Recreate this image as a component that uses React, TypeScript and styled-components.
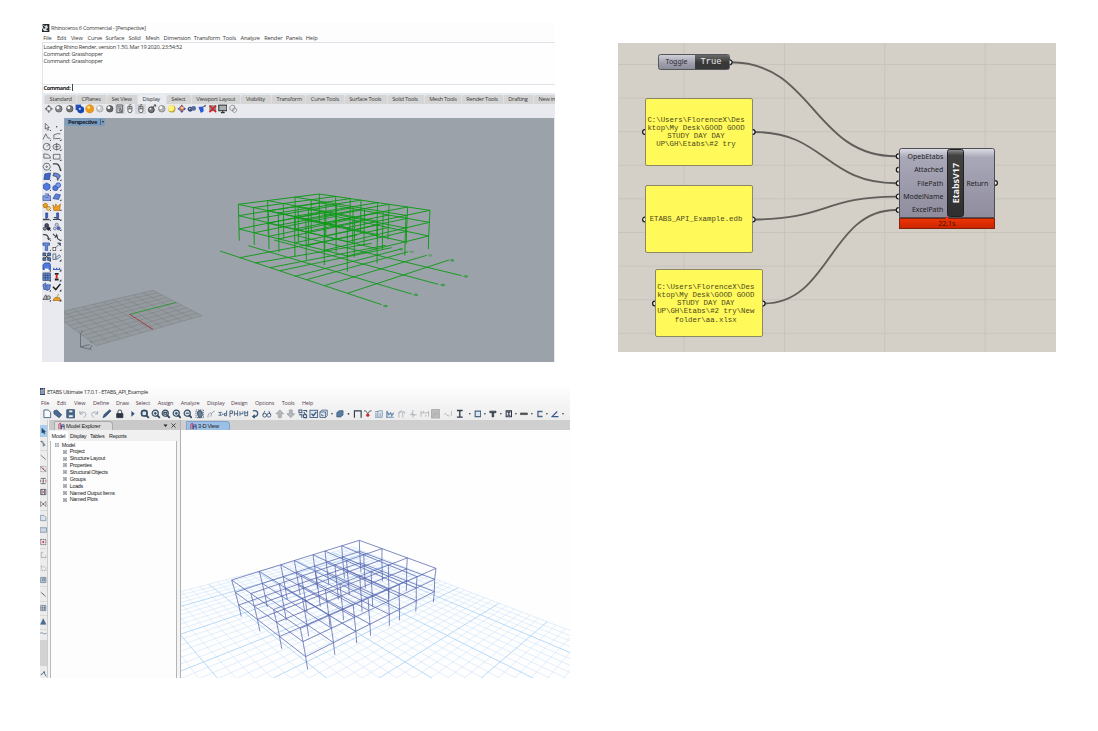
import React from "react";
import styled, { createGlobalStyle } from "styled-components";

const Global = createGlobalStyle`
  * { box-sizing: border-box; }
  body { margin: 0; background: #fff; overflow: hidden; font-family: "Open Sans", "Noto Sans", sans-serif; }
  svg { display: block; }
`;

/* ---------- geometry helpers ---------- */
type P = [number, number];
const mix = (a: P, b: P, t: number): P => [a[0] + (b[0] - a[0]) * t, a[1] + (b[1] - a[1]) * t];
const seg = (a: P, b: P) => `M${a[0].toFixed(2)} ${a[1].toFixed(2)}L${b[0].toFixed(2)} ${b[1].toFixed(2)}`;
const cross = (a: P, b: P, c: P, d: P): P => {
  const rx = b[0] - a[0], ry = b[1] - a[1], sx = d[0] - c[0], sy = d[1] - c[1];
  const t = ((c[0] - a[0]) * sy - (c[1] - a[1]) * sx) / (rx * sy - ry * sx);
  return [a[0] + rx * t, a[1] + ry * t];
};

/* A storey is the quad left, back, right, front; the splits divide its edges into bays. */
type Storey = [P, P, P, P];
type Splits = { lf: number[]; br: number[]; lb: number[]; fr: number[] };
function framePath(storeys: Storey[], s: Splits): string {
  const nodes = storeys.map(([L, B, R, F]) =>
    s.lf.map((u, i) =>
      s.lb.map((v, j) => cross(mix(L, F, u), mix(B, R, s.br[i]), mix(L, B, v), mix(F, R, s.fr[j])))
    )
  );
  let d = "";
  nodes.forEach((n, k) => {
    if (k < nodes.length - 1) {
      n.forEach((row) => (d += seg(row[0], row[row.length - 1])));
      n[0].forEach((_, j) => (d += seg(n[0][j], n[n.length - 1][j])));
    }
  });
  nodes[0].forEach((row, i) => row.forEach((_, j) => {
    for (let k = 0; k < nodes.length - 1; k++) d += seg(nodes[k][i][j], nodes[k + 1][i][j]);
  }));
  return d;
}

/* ---------- page ---------- */
const Page = styled.main`
  width: 1098px; height: 731px; padding: 22px 0 0 40px;
  display: flex; align-items: flex-start; gap: 48px;
`;
const Column = styled.div`display: flex; flex-direction: column; width: 530px;`;
const Spread = styled.div<{ $h: number; $pad?: number; $bg?: string }>`
  display: flex; align-items: center; flex: none; height: ${(p) => p.$h}px;
  padding-left: ${(p) => p.$pad ?? 0}px; background: ${(p) => p.$bg ?? "transparent"};
  white-space: nowrap; overflow: hidden;
`;
const Slot = styled.span<{ $w: number }>`flex: none; width: ${(p) => p.$w}px; white-space: nowrap;`;
const IconCell = styled.span<{ $w: number; $on?: boolean }>`
  flex: none; width: ${(p) => p.$w}px; height: 10px; display: flex; align-items: center; justify-content: center;
  background: ${(p) => (p.$on ? "#d3d6da" : "transparent")};
`;
const Glyph = ({ d, fill = "none", stroke = "#3c4250", size = 9.6, children, w = 0.9 }: {
  d?: string; fill?: string; stroke?: string; size?: number; children?: React.ReactNode; w?: number;
}) => (
  <svg width={size} height={size} viewBox="0 0 10 10" fill={fill} stroke={stroke} strokeWidth={w}>
    {d && <path d={d} />}
    {children}
  </svg>
);

/* widths between consecutive centres */
const widths = (c: number[]) =>
  c.map((x, i) => {
    const a = i ? (x - c[i - 1]) / 2 : (c[1] - x) / 2;
    const b = i < c.length - 1 ? (c[i + 1] - x) / 2 : a;
    return a + b;
  });

/* ---------- Rhinoceros ---------- */
const Rhino = styled.section`
  width: 513.5px; height: 339.5px; margin-left: 1.5px; display: flex; flex-direction: column; overflow: hidden;
  background: #fdfdfd; color: #3a3a3a; font-size: 5.7px; letter-spacing: -0.17px;
`;
const TitleText = styled.span`padding-left: 1.5px; font-size: 5.7px; letter-spacing: -0.31px; color: #444;`;
const History = styled.div`
  flex: none; height: 41.5px; border-top: 1px solid #dfe3ea; border-left: 1.5px solid #dfe3ea; background: #fefefe;
  padding: 1px 0 0 1px; line-height: 7.2px; letter-spacing: -0.27px; font-size: 5.65px;
`;
const Prompt = styled.div`
  flex: none; height: 9px; border-top: 1px solid #dfe3ea; border-left: 1.5px solid #dfe3ea; padding: 0 0 1.5px 1px;
  display: flex; align-items: center; font-weight: 700; color: #222; background: #fff; font-size: 5.5px; letter-spacing: -0.35px;
`;
const Caret = styled.i`width: 0.8px; height: 7px; background: #444; margin-left: 1.8px;`;
const TabRow = styled.div`
  height: 10.5px; padding: 2px 0 0 2.5px; background: #e6e9ef; display: flex; overflow: hidden; flex: none;
`;
const RTab = styled.span<{ $w: number; $on?: boolean }>`
  flex: none; width: ${(p) => p.$w}px; height: 8.5px; line-height: 8.5px; padding-left: 4.6px; white-space: nowrap; letter-spacing: -0.27px;
  background: ${(p) => (p.$on ? "#e9ebf0" : "#d5d5d5")}; border-left: 1px solid #dedfe2;
  border-top-left-radius: 3px; color: #3a3a3a;
`;
const RBody = styled.div`flex: 1; display: flex; min-height: 0; background: #e8eaef;`;
const Tools = styled.div`
  width: 22.5px; padding: 3.7px 0 0 0; display: grid; grid-template-columns: 10.3px 10.3px; grid-auto-rows: 10.06px;
  align-content: start; justify-items: center; align-items: center;
`;
const Viewport = styled.div`position: relative; width: 490px; background: #9ca2aa;`;
const ViewLabel = styled.div`
  position: absolute; left: 1px; top: 0; width: 40px; height: 8.5px; background: #7c9dbe; color: #14202e; font-weight: 700;
  font-size: 5.7px; line-height: 8.5px; padding-left: 3px; letter-spacing: -0.37px; white-space: nowrap;
  & > i { position: absolute; left: 35px; top: 1px; width: 1px; height: 6px; background: #4c647e; }
  & > b { position: absolute; left: 36.6px; top: 3px; border: 1.5px solid transparent; border-top: 2px solid #1a2735; }
`;

const rMenu: [string, number][] = [["File", 13.7], ["Edit", 14], ["View", 16.7], ["Curve", 18], ["Surface", 23], ["Solid", 17], ["Mesh", 18], ["Dimension", 30.3], ["Transform", 29], ["Tools", 17.7], ["Analyze", 23.6], ["Render", 21.7], ["Panels", 20], ["Help", 20]];
const rTabs: [string, number][] = [["Standard", 32], ["CPlanes", 30], ["Set View", 31], ["Display", 28.7], ["Select", 25], ["Viewport Layout", 49.6], ["Visibility", 30.7], ["Transform", 34.3], ["Curve Tools", 38.4], ["Surface Tools", 43], ["Solid Tools", 37], ["Mesh Tools", 37], ["Render Tools", 42], ["Drafting", 30.3], ["New in", 24]];

const Ball = ({ c, hi = "#fff", ring = "#444" }: { c: string; hi?: string; ring?: string }) => (
  <Glyph stroke={ring} w={0.7}>
    <circle cx="5" cy="5" r="3.4" fill={c} />
    <circle cx="4" cy="3.8" r="1.5" fill={hi} stroke="none" />
  </Glyph>
);
const Mouse = () => <Glyph d="M3 2.500h4.200v4.500a2.100 2.100 0 0 1-4.200 0zM3 5h4.200M5 2.500V5M4 1.300l2.500-.8" stroke="#555" fill="#f2f2f2" />;
const rIcons: [number, React.ReactNode, boolean?][] = [
  [49, <Glyph stroke="#666"><circle cx="5" cy="5" r="2.600" fill="#f4f4f4" /><path d="M5 1v2.500M5 6.500V9M1 5h2.500M6.500 5H9" strokeWidth="1.300" /></Glyph>],
  [59.3, <Ball c="#8c8c8c" />],
  [69.3, <Ball c="#777" />],
  [79.3, <Glyph w={0.6} stroke="#123a9c"><rect x="1" y="1" width="5" height="5" fill="#2a58c8" /><circle cx="6" cy="6" r="3.4" fill="#1848b8" /><circle cx="5" cy="5" r="1.2" fill="#bcd2ff" stroke="none" /></Glyph>],
  [89.3, <Glyph stroke="#d27a08" w={0.5}><circle cx="5" cy="5" r="4.300" fill="#f09a1c" /><circle cx="3.800" cy="3.600" r="1.500" fill="#ffe08a" stroke="none" /></Glyph>],
  [99.3, <Ball c="#cfd1d3" ring="#999" />],
  [109.3, <Ball c="#666" />],
  [119.7, <Glyph d="M2 1h6v8H2zM3 3h4M3.5 5h3M4 7l2-2 1 3z" stroke="#555" />, true],
  [130.3, <Mouse />],
  [140.3, <Mouse />, true],
  [152.3, <Glyph stroke="#333" w={0.8}><circle cx="4.5" cy="6" r="3.1" fill="#777" /><circle cx="3.600" cy="5" r="1" fill="#eee" stroke="none" /><path d="M5 4l4-3M7 1h2v2" /></Glyph>],
  [162.3, <Ball c="#b3b3b3" ring="#777" />],
  [172, <Glyph stroke="none"><circle cx="5" cy="5" r="3.8" fill="#b99a2a" /><circle cx="4.4" cy="4.3" r="3.2" fill="#fff27a" /></Glyph>],
  [182.3, <Glyph stroke="none"><path d="M5 .5L7 3H3z" fill="#555" /><path d="M.5 5L3 3v4z" fill="#2a58c8" /><circle cx="5" cy="5" r="2.6" fill="#e46a32" /><path d="M4 3h3v2H4z" fill="#f6d6c8" /><path d="M9.5 5L7 7V3zM5 9.5L3 7h4z" fill="#3a58a8" /></Glyph>],
  [192.3, <Glyph stroke="none"><circle cx="3.3" cy="5.5" r="2.6" fill="#3b4a78" /><circle cx="6.9" cy="4.6" r="2.5" fill="#5a6a9c" /><circle cx="3" cy="5" r=".8" fill="#cdd8ff" /></Glyph>],
  [202, <Glyph stroke="none"><path d="M1.500 3l5-.5.5 5-3 2z" fill="#2a5ad2" /><path d="M6 3l3-2.500v2z" fill="#333" /></Glyph>],
  [212.3, <Glyph><path d="M2 2h6v5H2z" fill="#9aa" stroke="#666" /><path d="M1.5 1.5l7 7M8.5 1.5l-7 7" stroke="#d81e1e" strokeWidth="1.6" /></Glyph>],
  [222.7, <Glyph stroke="#333" w={1.1}><rect x=".8" y="1.2" width="8.4" height="5.8" fill="#a9b0b4" /><path d="M3 9h4M5 7v2" /></Glyph>],
  [233, <Glyph d="M2 3l2-2 3 1v3L5 7 2 6zM5 5l2-1 2 1.4v2L7 9 5 8z" stroke="#777" w={0.7} />],
];

const k = "#3d4148", bl = "#3f66c4", or = "#f0a020";
const Corner = () => <path d="M10 7.8v2.2H7.8z" fill="#222" stroke="none" />;
const rTools: React.ReactNode[] = [
  <path d="M3.500 1.500v6l1.400-1.200L6 8.800l1-.5-1-2.400h1.700z" fill="#fff" stroke={k} />,
  <circle cx="5" cy="5" r=".8" fill={k} stroke="none" />,
  <path d="M1 8L4 2l2 4 3 1" stroke={k} />,
  <path d="M2 8V3q4-2 7-1M3 7h6" stroke={k} />,
  <g stroke={k}><circle cx="5" cy="5" r="3.6" /><path d="M5 5l3-3" /></g>,
  <g stroke={k}><ellipse cx="5" cy="5.2" rx="4" ry="3" /><path d="M5 1v8M3 5h4" /></g>,
  <path d="M2 2q7 0 7 4.500H2z" stroke={k} />,
  <path d="M1.5 2.5h7v5h-7z" stroke={k} />,
  <g stroke={k}><path d="M3 1.5h4l2 3.5-2 3.5H3L1 5z" /><circle cx="5" cy="5" r=".8" /></g>,
  <path d="M1 2h4q3 1 4 7" stroke={k} strokeWidth="1.4" />,
  <path d="M2 8L3 2l6-1-1 7z" fill={bl} stroke="#27418c" />,
  <path d="M2 1q5 0 7 3L6 9 5 5 1 4z" fill="#6b8bd6" stroke="#335" />,
  <path d="M1.5 3L5 1l3.5 2v4L5 9 1.5 7z" fill="#4f79e0" stroke="#2a489a" />,
  <g stroke="#2a489a"><circle cx="3.6" cy="6.4" r="2.8" fill="#4f79e0" /><circle cx="6.6" cy="3.4" r="2.6" fill="#7b9cf0" /></g>,
  <path d="M1 4h8v5H1zM3 2h4v2M3 6h4" fill="#8ca8ea" stroke="#3a559c" />,
  <path d="M1 7l3-5 5 1-2 5z" fill="#5b80d4" stroke="#2a489a" />,
  <g stroke="#a66a0a"><path d="M1 3l3-2 2 2-1 3-3 0z" fill={or} /><path d="M5 5l3 0 1 2-2 2-2-1z" fill="#ffd070" /></g>,
  <path d="M1 3l2 3 1-4 2 3 3-3-1 7H2z" fill={or} stroke="#b86c08" />,
  <g><path d="M4 1h2v5l-2 1z" fill={bl} stroke="#223c8a" /><path d="M1 8h7" stroke={k} strokeWidth="1.5" /></g>,
  <g><path d="M5 1h2v6H5z" fill={bl} stroke="#223c8a" /><path d="M1 8h8M2 6h3" stroke={k} strokeWidth="1.3" /></g>,
  <g stroke="#222" fill="#46507c"><circle cx="5" cy="3.6" r="2" /><circle cx="3" cy="7" r="1.7" fill="#99a" /><circle cx="7" cy="7" r="1.7" fill="#224" /></g>,
  <g stroke="#668" fill="#c6cdf0"><circle cx="5" cy="3" r="1.7" /><circle cx="3" cy="7" r="1.5" /><circle cx="7" cy="6.7" r="1.8" fill="#4460c8" /></g>,
  <path d="M1 3q6-1 6 5M6 6l1 2 2-1" stroke={k} strokeWidth="1.2" />,
  <path d="M1 2l3 3 1-2 1 4 3 2M3 6l3-2" stroke={k} strokeWidth="1.1" />,
  <path d="M1 1h7v2.5H6V9H3.5V3.5H1z" fill="#6b8fe0" stroke="#2c4890" />,
  <g stroke={k}><rect x="1" y="6" width="3" height="3" fill="#fff" /><path d="M4 6l3-3M6 1h3v3z" fill="#579" /></g>,
  <g fill="#5b80d4" stroke="#234"><path d="M1 1h3v3H1zM6 1h3v3H6zM1 6h3v3H1zM6 6h3v3H6z" /><path d="M3 3l4 4M7 3L3 7" stroke="#222" /></g>,
  <path d="M1 2h3v6H1zM4 6l4-3 1 2-4 3z" fill="#dbe4fa" stroke="#456" />,
  <g><path d="M1 3l2-2h5l1 2v5H1z" fill="#4f79e0" stroke="#26408c" /><path d="M3 7h4v2H3z" fill="#fff" stroke="none" /></g>,
  <path d="M1 8h8M2 6v2M5 6v2M8 6v2" stroke="#3e62c0" strokeWidth="1.3" />,
  <g fill="#6b8fe0" stroke="#38486c"><path d="M1 1h8v8H1zM1 3.6h8M1 6.2h8M3.6 1v8M6.2 1v8" /></g>,
  <g stroke="none"><path d="M3 1h4v2H3zM3 7h4v2H3z" fill="#222" /><path d="M4 3h2v4H4z" fill="#d42222" /></g>,
  <path d="M1 3l3-2v7H2zM5 3h4L8 8 5 9z" fill="#6b8fe0" stroke="#2c4890" />,
  <path d="M1 5l3 3 5-6" stroke="#222" strokeWidth="1.6" />,
  <g stroke={k} fill="#bbb"><path d="M1 8l3-5 2 5z" /><circle cx="7" cy="6" r="2" /></g>,
  <path d="M1 9l2-3h5l1 3zM5 6l2-4" fill={or} stroke="#9c6a14" />,
];

const rz = (x: number, y: number): P => [215 + x / 3 - 64, 180 + y / 3 - 118];
const rStoreys: Storey[] = [
  [rz(70, 73), rz(313, 42), rz(645, 91), rz(397, 143)],
  [rz(71, 107), rz(313, 68), rz(643, 127), rz(397, 185)],
  [rz(72, 147), rz(313, 99), rz(641, 168), rz(397, 228)],
  [rz(73, 182), rz(313, 130), rz(640, 207), rz(397, 275)],
];
const rSplits: Splits = {
  lf: [0, 0.139, 0.275, 0.367, 0.515, 0.62, 0.787, 1],
  br: [0, 0.148, 0.28, 0.377, 0.527, 0.63, 0.798, 1],
  lb: [0, 0.362, 0.7, 1],
  fr: [0, 0.367, 0.71, 1],
};
const rGround: [number, number, number, number][] = [
  [15, 213, 500, 374], [100, 197, 590, 342], [177, 180, 670, 313], [245, 167, 740, 287],
  [75, 233, 425, 166], [120, 249, 470, 190], [165, 263, 512, 196], [195, 272, 530, 203], [240, 289, 562, 206], [275, 299, 580, 215], [328, 317, 635, 226], [397, 340, 702, 240],
];
const cz = (x: number, y: number): P => [38 + x / 3 - 64, 115 + y / 3 - 118];
const plane: Storey = [cz(45, 596), cz(345, 526), cz(492, 602), cz(175, 692)];
function planePath(): string {
  const [L, B, R, F] = plane;
  let d = "";
  for (let i = 0; i <= 10; i++) {
    const t = i / 10;
    d += seg(mix(L, B, t), mix(F, R, t ** 0.92)) + seg(mix(L, F, t ** 1.08), mix(B, R, t ** 1.04));
  }
  return d;
}
const Labels = () => (
  <g stroke="#149a1c" strokeWidth="1">
    {[[511, 377], [602, 343], [683, 314], [752, 288], [711, 240], [645, 225], [590, 214], [558, 207]].map(([x, y], i) => {
      const p = rz(x, y);
      return <path key={i} d={`M${p[0] - 2.3} ${p[1] + 0.5}q2-1.4 4.4-.4M${p[0] - 1} ${p[1] + 1}h3`} strokeOpacity={i > 4 ? 0.45 : 0.85} />;
    })}
  </g>
);

const RhinoWindow = () => (
  <Rhino>
    <Spread $h={11.5}>
      <svg width="8" height="8" viewBox="0 0 8 8"><rect width="7.4" height="8" fill="#26292c" /><path d="M0 0l3 2 2-1 1 3-2 1 2 2-4 0-2-3z" fill="#d9dcde" /><path d="M1 1.6l2 2-1 1zM5 5l2 2" stroke="#222" strokeWidth=".7" /></svg>
      <TitleText>Rhinoceros 6 Commercial - [Perspective]</TitleText>
    </Spread>
    <Spread $h={8.5} $pad={1.7}>{rMenu.map(([t, w]) => <Slot key={t} $w={w}>{t}</Slot>)}</Spread>
    <History>
      <div>Loading Rhino Render, version 1.50, Mar 19 2020, 23:54:52</div>
      <div>Command: Grasshopper</div>
      <div>Command: Grasshopper</div>
    </History>
    <Prompt>Command:<Caret /></Prompt>
    <Spread $h={0.5} $bg="#e6e9ef" />
    <TabRow>{rTabs.map(([t, w]) => <RTab key={t} $w={w} $on={t === "Display"}>{t}</RTab>)}</TabRow>
    <Spread $h={11.5} $pad={2.4} $bg="#e8eaef">
      {rIcons.map(([, g, on], i) => <IconCell key={i} $w={widths(rIcons.map((r) => r[0]))[i]} $on={on}>{g}</IconCell>)}
    </Spread>
    <Spread $h={2.5} $bg="#e8eaef" />
    <RBody>
      <Tools>{rTools.map((g, i) => <Glyph key={i} w={0.75} size={9.4}>{g}<Corner /></Glyph>)}</Tools>
      <Viewport>
        <svg width="490" height="243" viewBox="0 0 490 243" fill="none">
          <path d={`M${plane.map((p) => p.join(" ")).join("L")}Z`} fill="#959a9f" />
          <path d={planePath()} stroke="#7b8087" strokeWidth=".5" />
          <path d={seg(cz(275, 598), cz(415, 562))} stroke="#2c9a34" strokeWidth=".9" />
          <path d={seg(cz(275, 598), cz(345, 643))} stroke="#a83238" strokeWidth=".9" />
          <path d="M16.500 215v14l11 2.500M16.500 229l9-2.500M17 214.500l2-1M26 223l2 2M26 231l2-4" stroke="#555b63" strokeWidth=".7" />
          <path d={rGround.map(([a, b, c, e]) => seg(rz(a, b), rz(c, e))).join("")} stroke="#149a1c" strokeWidth=".95" />
          <path d={framePath(rStoreys, rSplits)} stroke="#0f9a18" strokeWidth=".95" />
          <Labels />
        </svg>
        <ViewLabel>Perspective<i /><b /></ViewLabel>
      </Viewport>
    </RBody>
  </Rhino>
);

/* ---------- ETABS ---------- */
const Etabs = styled.section`
  width: 529.5px; height: 292px; margin-top: 24.5px; display: flex; flex-direction: column; overflow: hidden;
  background: #f4f4f4; color: #222; font-size: 5.5px; letter-spacing: -0.15px;
`;
const ETop = styled.div`background: linear-gradient(#fefefe, #ededee); color: #573f50;`;
const ETitle = styled.div`
  height: 11.5px; display: flex; align-items: center; gap: 2px; color: #333; letter-spacing: -0.37px; font-size: 5.7px;
`;
const EBody = styled.div`flex: 1; display: flex; min-height: 0;`;
const Rail = styled.div`
  width: 7.5px; background: #ececec; border-right: 0.5px solid #ccc; display: flex; flex-direction: column; align-items: center; overflow: hidden;
`;
const RailCell = styled.span<{ $h: number; $on?: boolean; $rule?: boolean }>`
  flex: none; width: 100%; height: ${(p) => p.$h}px; display: flex; align-items: center; justify-content: center;
  background: ${(p) => (p.$on ? "#a9cdee" : "transparent")};
  border-top: ${(p) => (p.$rule ? "1px solid #dadada" : "none")};
`;
const RailGap = styled.div`width: 100%; flex: none; height: 26px; margin: 2.5px 0 4px; background: #d2d2d2;`;
const Explorer = styled.div`
  width: 130.5px; margin-left: 1.5px; display: flex; flex-direction: column; font-family: "Liberation Sans", sans-serif;
  font-size: 5.5px; letter-spacing: -0.25px;
`;
const EHead = styled.div`height: 10px; background: #c9c9c9; display: flex; align-items: flex-end; padding: 0 4px 0 5px;`;
const ECaption = styled.div<{ $active?: boolean }>`
  width: ${(p) => (p.$active ? 44 : 59)}px; height: 9px; display: flex; align-items: center; gap: 1px; padding-left: 3px;
  background: ${(p) => (p.$active ? "#9cbfe6" : "#dcdcdc")}; border: 0.7px solid ${(p) => (p.$active ? "#7fa3cc" : "#aaa")};
  border-bottom: none; border-radius: 1px 4px 0 0; font-family: "Liberation Sans", sans-serif; letter-spacing: -0.28px; font-size: 5.7px;
`;
const HeadTools = styled.div`margin-left: auto; height: 10px; display: flex; align-items: center; gap: 3px;`;
const ETabs = styled.div`height: 10.5px; display: flex; background: #f0f0f0; align-items: flex-end; padding-left: 0.5px;`;
const ETab = styled.span<{ $w: number; $on?: boolean }>`
  width: ${(p) => p.$w}px; height: 9.5px; line-height: 10px; padding-left: 2px; background: ${(p) => (p.$on ? "#fff" : "transparent")};
`;
const Tree = styled.div`
  flex: 1; margin: 0 3px 0 1px; background: #fdfdfd; border-left: 0.5px solid #bbb; border-right: 1px solid #b5b5b5;
  padding: 1px 0 0 3.5px; letter-spacing: -0.27px; font-size: 5.4px;
`;
const Node = styled.div<{ $depth: number }>`
  display: flex; align-items: center; gap: 3px; height: 6.87px; line-height: 6.87px; padding-left: ${(p) => p.$depth * 8}px; white-space: nowrap;
`;
const Main = styled.div`
  flex: 1; display: flex; flex-direction: column; border-left: 1px solid #b0b0b0; background: #fefefe; min-width: 0;
`;
const MainHead = styled.div`height: 10px; background: #cfcfcf; display: flex; align-items: flex-end; padding-left: 5.5px; flex: none;`;

const Box = ({ minus }: { minus?: boolean }) => (
  <svg width="4.2" height="4.2" viewBox="0 0 5 5" fill="#fff" stroke="#8f99a8" strokeWidth=".8">
    <rect x=".5" y=".5" width="4" height="4" /><path d={minus ? "M1.5 2.5h2" : "M1.3 2.5h2.4M2.5 1.3v2.4"} stroke="#556" />
  </svg>
);
const eMenu: [string, number][] = [["File", 16], ["Edit", 17], ["View", 19], ["Define", 23], ["Draw", 19.7], ["Select", 22], ["Assign", 23], ["Analyze", 26.3], ["Display", 24], ["Design", 24], ["Options", 26.7], ["Tools", 20.3], ["Help", 20]];
const n = "#3b5878", g = "#aeb2b6";
const Lens = ({ s }: { s?: string }) => (
  <Glyph stroke="#33475e" w={1.2}><circle cx="4.4" cy="4.4" r="3.2" fill="#dce6f0" /><path d="M6.6 6.6L9.2 9.2" strokeWidth="2" />{s && <path d={s} />}</Glyph>
);
const Dot = () => <Glyph stroke="none"><circle cx="5" cy="5" r="1" fill="#333" /></Glyph>;
const eIcons: [number, React.ReactNode][] = [
  [47, <Glyph d="M2 1h4.5L9 3.4V9H2z" fill="#f6faff" stroke={n} />],
  [57.3, <Glyph d="M1 2l3-1 5 5-2.6 3L1 5z" fill="#4a6c90" stroke={n} />],
  [70.3, <Glyph stroke={n}><path d="M.8.8h8.4v8.4H.8z" fill="#4a6684" /><path d="M2.8 1h4.4v3H2.8zM2.4 6h5.2v3H2.4z" fill="#e8eef4" /></Glyph>],
  [83.7, <Glyph d="M2 5q2-3 5-1.4T6 9M2 2v3.2h3" stroke="#9aa4ae" />],
  [94, <Glyph d="M8 5q-2-3-5-1.4T4 9M8 2v3.2H5" stroke="#9aa4ae" />],
  [106.7, <Glyph d="M1 9l1.5-3.5L8 .8 9.4 2 4 7.6z" fill="#3d5d80" stroke={n} />],
  [120, <Glyph stroke="#2b3440"><path d="M3 5V3q0-2 2-2t2 2v2" /><path d="M1.8 4.8h6.4V9H1.8z" fill="#2b3440" /></Glyph>],
  [132.7, <Glyph d="M3.5 2L7 5 3.5 8z" fill="#2f5078" stroke="none" />],
  [145.3, <Lens s="M2 2h5v5H2z" />],
  [156, <Lens s="M3 4.4h3M4.4 3v3" />],
  [166.3, <Lens s="M3 3.5h3v2H3z" />],
  [176.7, <Lens s="M3 4.4h3M4.4 3v3" />],
  [187, <Lens s="M3 4.4h3" />],
  [200.3, <Glyph stroke="#33475e"><path d="M1 1h8v8H1z" strokeDasharray="1 1" /><path d="M2.5 5V3h1V2h1v-.5h1V2h1v1h1v4L6 9H4z" fill="#6a8098" /></Glyph>],
  [210.3, <Glyph d="M2 9q0-5 3-5M5 8q0-5 4-6" stroke="#8a98a8" />],
  [223.7, <Glyph d="M.5 3.5h3L2 5l1.5 1.5H.5M4 5.4h2M9 1.500v5.500H6.8V4.6H9" stroke={n} />],
  [234, <Glyph d="M1 2v6.500M1 2h2.600v2.600H1M5.600 2v5M9 1.500v6M5.600 5H9" stroke={n} />],
  [244.3, <Glyph d="M1 2.500v4.500M1 5h3V2.500M6 2v5h3M9 2v5M6 4h3" stroke={n} />],
  [255, <Glyph d="M3 2q5-1 5 2.5T4 8M5 6L3 8l2 1.4" stroke={n} w={1.4} />],
  [267, <Glyph stroke={n}><circle cx="2.8" cy="6.5" r="2" /><circle cx="7.2" cy="6.5" r="2" /><path d="M1 6l2-4M9 6L7 2M4.6 6h.8" /></Glyph>],
  [280.3, <Glyph d="M5 1l4 4H6.5v4h-3V5H1z" fill="#b4b7bb" stroke="#a0a3a7" />],
  [291, <Glyph d="M5 9l4-4H6.5V1h-3v4H1z" fill="#b4b7bb" stroke="#a0a3a7" />],
  [303.5, <Glyph d="M1 1h3v3H1zM5.5 1.5H9v2M1 6h3v3M5.5 6H9v3H6zM6 3l2 3" stroke={n} w={1.1} />],
  [314, <Glyph stroke={n}><rect x="1" y="1.3" width="8" height="7.6" fill="#dfe9f4" /><path d="M2.6 5l2 2 3-4" strokeWidth="1.4" /></Glyph>],
  [324.3, <Glyph d="M1 3h6v6H1zM1 3l2-2h6v6L7 9M3 5v2h2" stroke={n} fill="#e4ecf4" />],
  [332.3, <Dot />],
  [340, <Glyph d="M1 3.5L4 1h5v5.5L6 9H1z" stroke={n} fill="#5a7ca4" />],
  [348, <Dot />],
  [358, <Glyph d="M1.5 9V2h7v7" stroke="#333f4c" w={1.2} />],
  [368.3, <Glyph><path d="M1 2h2l2 3 2-3h2" stroke="#555" /><circle cx="5" cy="6.500" r="1.7" fill="#cc2b2b" stroke="none" /></Glyph>],
  [379, <Glyph d="M1 8.6h8M2 8V4M4 8V2.6M6.4 8V4M8.6 8V1.6M1 3l7-1.4" stroke="#6a8cae" />],
  [389.3, <Glyph d="M1 8.6h8M2 8V2l2 4 2-2 1 3 2-3" stroke="#6a8cae" w={1.3} />],
  [402, <Glyph d="M2 9V3h6M6 3v6M2 5l3-4M8 3v2" stroke={g} />],
  [414.7, <Glyph d="M4 1v8M2 4l4 3M1 6h7" stroke={g} />],
  [425.3, <Glyph d="M1 8V2M1 4h8M9 2v6M4 2l-1 2M6 6v2" stroke={g} />],
  [436, <Glyph stroke="#aaa"><rect x=".6" y=".6" width="8.8" height="8.8" fill="#bcbcbc" /><path d="M2 8l3-4 3 2" /></Glyph>],
  [446, <Glyph d="M1 6q2-3 3 0t3 0M9 2v5" stroke={g} />],
  [462.3, <Glyph d="M2 1.6h6M5 1.6v6.8M2 8.4h6" stroke="#333f4c" w={1.4} />],
  [470, <Dot />],
  [477.7, <Glyph d="M1.5 1.5h7v7h-7z" fill="#dbe7f4" stroke="#4a6684" w={1.5} />],
  [485.7, <Dot />],
  [493.3, <Glyph d="M1 1.6h8v2H6V9H4V3.6H1z" fill="#333f4c" stroke="#333f4c" />],
  [501.3, <Dot />],
  [508.7, <Glyph stroke="#2b3644" w={1.4}><path d="M1.5 1.2h7v7.6h-7zM3 3h4M5 3v4M3 7h4" /></Glyph>],
  [516.7, <Dot />],
  [524.3, <Glyph d="M.5 4h9v2h-9zM2 4v2M4 4v2M6 4v2M8 4v2" fill="#777" stroke="#444" />],
  [532.3, <Dot />],
  [539.7, <Glyph d="M8.5 2h-6v6.5h6" stroke="#4a6684" w={1.7} />],
  [547.7, <Dot />],
  [555.3, <Glyph d="M.5 8.6h9M2 8l6-6" stroke="#355a8c" w={1.6} />],
  [563.3, <Dot />],
];
const rail: [number, React.ReactNode, boolean?, boolean?][] = [
  [5.2, null],
  [12, <path d="M3 1v7l2-1.6L6.4 9.4l1-.5L6 6h2.4z" fill="#22476c" stroke="#22476c" />, true],
  [13, <path d="M1 1h4M5 3v6M5 3l3 4H5M1 1l4 3" stroke={n} />],
  [13, <path d="M1 2l8 7" stroke="#3d5068" />, false, true],
  [11.7, <g><path d="M1 1h8v8H1z" stroke="#667" strokeDasharray="1 1" /><path d="M1 1l8 8" stroke="#333" /><circle cx="5" cy="5" r="1" fill="#d22" stroke="none" /></g>],
  [11.7, <g><path d="M1 1h8M1 9h8M5 1v8M1 3v4M9 3v4" stroke="#445" /><circle cx="5" cy="5" r="1" fill="#d22" stroke="none" /></g>],
  [11.7, <g><path d="M1 1h8v8H1zM3 1v8M7 1v8" stroke="#334" /><circle cx="5" cy="5" r="1.2" fill="#d22" stroke="none" /></g>],
  [12, <g><path d="M1 1l8 8M9 1L1 9M1 1v8M9 1v8" stroke="#667" /><circle cx="5" cy="5" r="1" fill="#d22" stroke="none" /></g>],
  [14, <path d="M1 1h5l3 3v5H1z" fill="#dbe5ef" stroke="#6b7f94" />, false, true],
  [11.7, <path d="M0 1.5h10v7H0z" fill="#c9d8e8" stroke="#6b7f94" />],
  [12, <g><path d="M1 1h8v8H1z" stroke="#334" strokeDasharray="2 1" fill="#e8dfe4" /><circle cx="5" cy="5" r="1.4" fill="#d22" stroke="none" /></g>],
  [14, <path d="M2 1v8h7V6M2 1h3" stroke="#999" />, false, true],
  [11.7, <path d="M2 1v8h7V4M2 3h5" stroke="#999" strokeDasharray="2 1" />],
  [12, <path d="M1 1h8v8H1zM4 3h3v3H4z" stroke="#5f7288" fill="#b9c8d6" />],
  [15, <path d="M1 2l8 7M4 4l2 2" stroke="#3d5068" />, false, true],
  [14, <path d="M1 1h8v8H1zM1 4h8M1 6.6h8M4 1v8M7 1v8" stroke="#5f7288" fill="#e0e8f0" />, false, true],
  [14, <path d="M5 0l4 8.500H1z" fill="#4d6d8e" stroke="#4d6d8e" />, false, true],
  [9, <path d="M0 4q2.500-2 5 0t5 0" stroke="#55718e" />, false, true],
];

const ez = (x: number, y: number): P => [180 + x / 3 - 180, 530 + y / 3 - 430];
const eStoreys: Storey[] = [
  [ez(152, 150), ez(535, 31), ez(765, 115), ez(358, 295)],
  [ez(163, 187), ez(536, 64), ez(761, 148), ez(366, 335)],
  [ez(173, 225), ez(538, 98), ez(760, 185), ez(374, 380)],
  [ez(181, 260), ez(540, 127), ez(757, 217), ez(380, 418)],
];
const eSplits: Splits = {
  lf: [0, 0.28, 0.61, 1],
  br: [0, 0.296, 0.626, 1],
  lb: [0, 0.217, 0.384, 0.491, 0.637, 0.731, 0.862, 1],
  fr: [0, 0.216, 0.39, 0.5, 0.65, 0.73, 0.86, 1],
};
/* Floor grid: both line families run from a vanishing point to even steps on a base line. */
const sh = (p: P): P => [p[0] - 180, p[1] - 430];
const vA: P = [-16, 406], vB: P = [758, 441];
const base = (x: number): P => [x, 678 + 0.045 * (x - 375)];
function floor(major: boolean): string {
  let d = "";
  const div = 6, a0 = 735, b0 = -74.67, sa = 112.5, sb = 97;
  for (let i = -4; i < 80; i++) {
    if ((Math.abs(i) % div === 0) !== major) continue;
    const x = 660 - (i * sa) / div;
    if (x > a0 + 1) continue;
    const far = cross(vA, base(x), vB, base(b0));
    if (far[0] < vA[0]) continue;
    const to = base(x);
    d += seg(sh(far), sh([to[0] + (to[0] - vA[0]), to[1] + (to[1] - vA[1])]));
  }
  for (let i = -34; i < 60; i++) {
    if ((Math.abs(i) % div === 0) !== major) continue;
    const x = 475 + (i * sb) / div;
    if (x < b0 - 1) continue;
    const far = cross(vB, base(x), vA, base(a0));
    const to = base(x);
    if (far[0] > vB[0]) continue;
    d += seg(sh(far), sh([to[0] + (to[0] - vB[0]), to[1] + (to[1] - vB[1])]));
  }
  return d;
}
const Logo = () => (
  <svg width="7" height="7.500" viewBox="0 0 8 8" fill="none" strokeWidth="1"><path d="M1 8V2l2-1v7" stroke="#c8325a" /><path d="M4 8V3h3v5M4 5h3" stroke="#28518c" /></svg>
);

const EtabsWindow = () => (
  <Etabs>
    <ETop>
      <ETitle>
        <svg width="5" height="7" viewBox="0 0 5 7"><rect width="5" height="7" fill="#34466a" /><path d="M1 6V2h1v4M3 6V1h1v5" stroke="#e8ecf2" strokeWidth=".6" fill="none" /></svg>
        ETABS Ultimate 17.0.1 - ETABS_API_Example
      </ETitle>
      <Spread $h={11} $pad={1}>{eMenu.map(([t, w]) => <Slot key={t} $w={w}>{t}</Slot>)}</Spread>
      <Spread $h={11.5} $pad={1.8}>
        {eIcons.map(([, ic], i) => <IconCell key={i} $w={widths(eIcons.map((r) => r[0]))[i]}>{ic}</IconCell>)}
      </Spread>
    </ETop>
    <EBody>
      <Rail>
        {rail.map(([h, ic, on, rule], i) => <RailCell key={i} $h={h} $on={on} $rule={rule}>{ic && <Glyph size={8} w={1}>{ic}</Glyph>}</RailCell>)}
        <RailGap />
        <Glyph size={7} d="M1 7l3-2 2-3 1 4 2 3" stroke={n} w={1.2} />
      </Rail>
      <Explorer>
        <EHead>
          <ECaption><Logo />Model Explorer</ECaption>
          <HeadTools><Glyph size={5} d="M1 3h8L5 8z" fill="#222" stroke="none" /><Glyph size={5} d="M1 1l8 8M9 1L1 9" stroke="#222" w={1.6} /></HeadTools>
        </EHead>
        <ETabs><ETab $w={18.5} $on>Model</ETab><ETab $w={20}>Display</ETab><ETab $w={19}>Tables</ETab><ETab $w={24}>Reports</ETab></ETabs>
        <Tree>
          <Node $depth={0}><Box minus />Model</Node>
          {["Project", "Structure Layout", "Properties", "Structural Objects", "Groups", "Loads", "Named Output Items", "Named Plots"].map((t) => (
            <Node key={t} $depth={1}><Box />{t}</Node>
          ))}
        </Tree>
      </Explorer>
      <Main>
        <MainHead><ECaption $active><Logo />3-D View</ECaption></MainHead>
        <svg width="389" height="248" viewBox="0 0 389 248" fill="none">
          <path d={floor(false)} stroke="#c9e2fa" strokeWidth=".55" />
          <path d={floor(true)} stroke="#a6d1f7" strokeWidth=".8" />
          <path d={framePath(eStoreys, eSplits)} stroke="#5664ae" strokeWidth=".75" />
        </svg>
      </Main>
    </EBody>
  </Etabs>
);

/* ---------- Grasshopper canvas ---------- */
const Canvas = styled.section`
  position: relative; width: 438px; height: 309px; margin-top: 21px; overflow: hidden; background-color: #d4cfc7;
  background-image: linear-gradient(90deg, #c8c4bd 1px, transparent 1px), linear-gradient(#c8c4bd 1px, transparent 1px);
  background-size: 100.4px 100%, 100% 33.6px; background-position: 65.5px 0, 0 21px;
`;
const Wires = styled.svg`position: absolute; left: 0; top: 0;`;
const Panel = styled.div<{ $x: number; $y: number }>`
  position: absolute; left: ${(p) => p.$x}px; top: ${(p) => p.$y}px; width: 108px; height: 68px; padding: 0 6px 0 0;
  background: #fff959; border: 1px solid #8b8862; border-radius: 2px; display: flex; align-items: center; justify-content: center;
  text-align: center; white-space: pre; font: 7.36px/8.1px "Liberation Mono", monospace; color: #4a4720;
`;
const Toggle = styled.div`
  position: absolute; left: 40px; top: 11px; width: 72px; height: 16px; display: flex; border: 1px solid #55555c; border-radius: 2.5px;
  background: linear-gradient(#cfcfd8, #9f9eac 60%, #8d8c9b); font: 7px/14px "Noto Sans", sans-serif; color: #2a2a30; overflow: hidden;
  & > span { flex: 1; text-align: center; padding-right: 1px; }
  & > b { width: 34px; padding-right: 2px; background: linear-gradient(#6b6b6b, #383838 55%); color: #e8e8e8; text-align: center; font: 8.8px/14.5px "Liberation Mono", monospace; }
`;
const Component = styled.div`
  position: absolute; left: 280.5px; top: 105px; width: 96.5px; height: 70px; display: flex; border: 1px solid #4e4d55; border-radius: 2.5px 2.5px 0 0;
  background: linear-gradient(#dcdce4, #a9a8b8 12%, #8f8d9d); font: 6.95px "Noto Sans", sans-serif; color: #1e1d24;
`;
const Inputs = styled.div`
  width: 47.5px; padding: 0.6px 3.7px 0 0; display: flex; flex-direction: column; text-align: right; line-height: 13.45px;
`;
const Core = styled.div`
  width: 17px; background: linear-gradient(#8a8a8a, #424242 8%, #2f2f2f); border: 1px solid #222; border-radius: 2.5px;
  display: flex; align-items: center; justify-content: center; color: #f2f2f2;
  & > span { writing-mode: vertical-rl; transform: rotate(180deg); font: 700 9px/15px "Noto Sans", sans-serif; letter-spacing: -0.05px; }
`;
const Output = styled.div`flex: 1; display: flex; align-items: center; padding-left: 2.5px; letter-spacing: -0.1px;`;
const Timing = styled.div`
  position: absolute; left: 280.5px; top: 175px; width: 96.5px; height: 11px; background: linear-gradient(#ee3404, #cc2600); border: 1px solid #7c2410;
  text-align: center; font: 7px/9px "Noto Sans", sans-serif; color: #4a1004;
  &::before { content: ""; position: absolute; left: 45px; top: -3.5px; border: 2.5px solid transparent; border-top: 0; border-bottom: 3px solid #ee3404; }
`;
const wires: [number, number, number, number][] = [[731, 62.3, 896, 156.3], [754, 132, 896, 183.2], [754, 219.5, 896, 196.6], [764, 303.5, 896, 210]];
const grips: [number, number, boolean][] = [
  [729.7, 62.3, true], [752.7, 132, true], [752.7, 219.5, true], [762.7, 303.5, true], [995, 183, true],
  [645, 132, false], [645, 219.5, false], [655, 303.5, false],
  [898.7, 156.3, false], [898.7, 169.7, false], [898.7, 183.2, false], [898.7, 196.6, false], [898.7, 210, false],
];
const GrasshopperCanvas = () => (
  <Canvas>
    <Panel $x={27} $y={55}>{"C:\\Users\\FlorenceX\\Des\nktop\\My Desk\\GOOD GOOD\nSTUDY DAY DAY\nUP\\GH\\Etabs\\#2 try"}</Panel>
    <Panel $x={27} $y={142.4}>ETABS_API_Example.edb</Panel>
    <Panel $x={36.8} $y={226.4}>{"C:\\Users\\FlorenceX\\Des\nktop\\My Desk\\GOOD GOOD\nSTUDY DAY DAY\nUP\\GH\\Etabs\\#2 try\\New\nfolder\\aa.xlsx"}</Panel>
    <Toggle><span>Toggle</span><b>True</b></Toggle>
    <Component>
      <Inputs>{["OpebEtabs", "Attached", "FilePath", "ModelName", "ExcelPath"].map((t) => <span key={t}>{t}</span>)}</Inputs>
      <Core><span>EtabsV17</span></Core>
      <Output>Return</Output>
    </Component>
    <Timing>22.1s</Timing>
    <Wires width="438" height="309" viewBox="618 43 438 309" fill="none">
      {wires.map(([a, b, c, e], i) => {
        const m = (a + c) / 2;
        return <path key={i} d={`M${a} ${b}C${m} ${b} ${m} ${e} ${c} ${e}`} stroke="#605e5a" strokeWidth="1.9" />;
      })}
      {grips.map(([x, y, out], i) => (
        <path key={i} d={`M${x} ${y - 2.4}a2.4 2.4 0 0 ${out ? 1 : 0} 0 4.8`} fill="#eee" stroke="#161616" strokeWidth="1.2" />
      ))}
    </Wires>
  </Canvas>
);

export default function App() {
  return (
    <Page>
      <Global />
      <Column>
        <RhinoWindow />
        <EtabsWindow />
      </Column>
      <GrasshopperCanvas />
    </Page>
  );
}
